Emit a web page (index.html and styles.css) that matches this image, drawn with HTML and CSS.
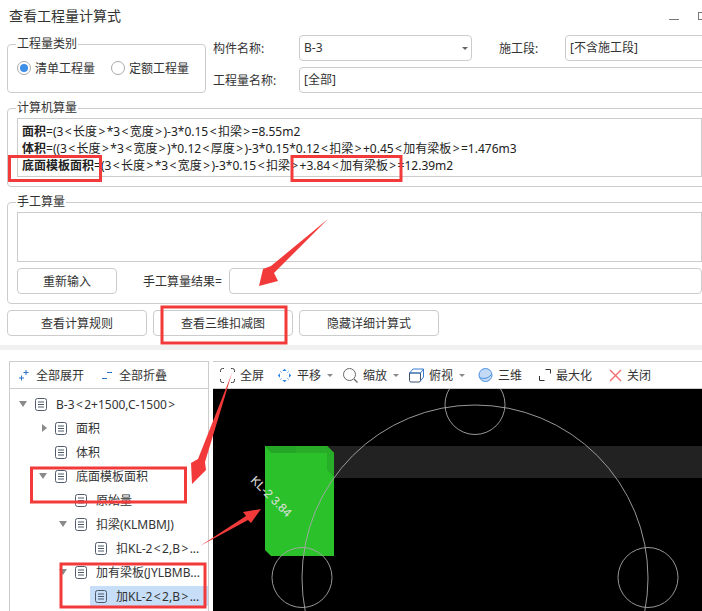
FILE: index.html
```html
<!DOCTYPE html>
<html lang="zh-CN">

<head>
    <meta charset="UTF-8">
    <meta name="viewport" content="width=device-width, initial-scale=1.0">
    <title>查看工程量计算式</title>
    <link rel="stylesheet" href="styles.css">
</head>

<body>
    <svg class="defs" width="0" height="0">
        <symbol id="doc" viewBox="0 0 12 13">
            <rect x="0.5" y="0.5" width="11" height="12" rx="2" fill="none" stroke="#4f5a6b" />
            <path d="M3 4h6M3 6.5h6M3 9h6" stroke="#4f5a6b" fill="none" />
        </symbol>
    </svg>

    <div class="page">
        <div class="titlebar">
            <span class="title">查看工程量计算式</span>
            <span class="win-min"></span>
            <span class="win-max"></span>
        </div>

        <div class="top">
            <fieldset class="group type-group">
                <legend>工程量类别</legend>
                <div class="radios">
                    <span class="radio checked"></span><span class="radio-text">清单工程量</span>
                    <span class="radio second"></span><span class="radio-text">定额工程量</span>
                </div>
            </fieldset>
            <div class="fields">
                <span class="field-label">构件名称:</span>
                <div class="input select">B-3<span class="caret"></span></div>
                <span class="field-label seg-label">施工段:</span>
                <div class="input seg-input">[不含施工段]</div>
                <span class="field-label">工程量名称:</span>
                <div class="input name-input">[全部]</div>
            </div>
        </div>

        <fieldset class="group calc-group">
            <legend>计算机算量</legend>
            <div class="box formulas">
                <div><b>面积</b>=(3<i>&lt;</i>长度<i>&gt;</i>*3<i>&lt;</i>宽度<i>&gt;</i>)-3*0.15<i>&lt;</i>扣梁<i>&gt;</i>=8.55m2</div>
                <div><b>体积</b>=((3<i>&lt;</i>长度<i>&gt;</i>*3<i>&lt;</i>宽度<i>&gt;</i>)*0.12<i>&lt;</i>厚度<i>&gt;</i>)-3*0.15*0.12<i>&lt;</i>扣梁<i>&gt;</i>+0.45<i>&lt;</i>加有梁板<i>&gt;</i>=1.476m3</div>
                <div><b>底面模板面积</b>=(3<i>&lt;</i>长度<i>&gt;</i>*3<i>&lt;</i>宽度<i>&gt;</i>)-3*0.15<i>&lt;</i>扣梁<i>&gt;</i>+3.84<i>&lt;</i>加有梁板<i>&gt;</i>=12.39m2</div>
            </div>
        </fieldset>

        <fieldset class="group manual-group">
            <legend>手工算量</legend>
            <div class="box manual-box"></div>
            <div class="manual-row">
                <button class="btn reset-btn">重新输入</button>
                <span class="result-label">手工算量结果=</span>
                <div class="input result-input"></div>
            </div>
        </fieldset>

        <div class="actions">
            <button class="btn">查看计算规则</button>
            <button class="btn">查看三维扣减图</button>
            <button class="btn">隐藏详细计算式</button>
        </div>

        <div class="strip"></div>

        <div class="lower">
            <div class="tree-panel">
                <div class="tree-head">
                    <span class="head-btn">
                        <svg width="10" height="11" viewBox="0 0 10 11"><path d="M4.500 2.500h5M7 0v5M0 8h5M2.500 5.500v5" stroke="#2a72c8" fill="none" /></svg>
                        全部展开
                    </span>
                    <span class="head-btn">
                        <svg width="10" height="11" viewBox="0 0 10 11"><path d="M5 2.500h5M0 8.500h5" stroke="#2a72c8" fill="none" /></svg>
                        全部折叠
                    </span>
                </div>
                <div class="tree">
                    <div class="row level-0"><span class="tw open"></span><span class="node"><svg class="doc"><use href="#doc" /></svg><span>B-3<i>&lt;</i>2+1500,C-1500<i>&gt;</i></span></span></div>
                    <div class="row level-1"><span class="tw closed"></span><span class="node"><svg class="doc"><use href="#doc" /></svg>面积</span></div>
                    <div class="row level-1"><span class="tw"></span><span class="node"><svg class="doc"><use href="#doc" /></svg>体积</span></div>
                    <div class="row level-1"><span class="tw open"></span><span class="node"><svg class="doc"><use href="#doc" /></svg>底面模板面积</span></div>
                    <div class="row level-2"><span class="tw"></span><span class="node"><svg class="doc"><use href="#doc" /></svg>原始量</span></div>
                    <div class="row level-2"><span class="tw open"></span><span class="node"><svg class="doc"><use href="#doc" /></svg>扣梁(KLMBMJ)</span></div>
                    <div class="row level-3"><span class="tw"></span><span class="node"><svg class="doc"><use href="#doc" /></svg><span>扣KL-2<i>&lt;</i>2,B<i>&gt;</i>...</span></span></div>
                    <div class="row level-2"><span class="tw open"></span><span class="node"><svg class="doc"><use href="#doc" /></svg>加有梁板(JYLBMB...</span></div>
                    <div class="row level-3"><span class="tw"></span><span class="node selected"><svg class="doc"><use href="#doc" /></svg><span>加KL-2<i>&lt;</i>2,B<i>&gt;</i>...</span></span></div>
                </div>
            </div>

            <div class="view-panel">
                <div class="toolbar">
                    <span class="tool">
                        <svg width="15" height="15" viewBox="0 0 15 15"><path d="M.5 4V2.500a2 2 0 0 1 2-2H4M11 .5h1.500a2 2 0 0 1 2 2V4M14.500 11v1.500a2 2 0 0 1-2 2H11M4 14.500H2.500a2 2 0 0 1-2-2V11" fill="none" stroke="#444" /></svg>
                        全屏
                    </span>
                    <span class="tool has-caret">
                        <svg width="15" height="15" viewBox="0 0 15 15"><path d="M5.300 3 7.500.8 9.700 3zM5.300 12 7.500 14.200 9.700 12zM3 5.300.8 7.500 3 9.700zM12 5.300 14.200 7.500 12 9.700z" fill="#2d86e6" /><path d="M3.500 3.500l1 1M11.500 3.500l-1 1M3.500 11.500l1-1M11.500 11.500l-1-1" stroke="#2d86e6" /></svg>
                        平移
                    </span>
                    <span class="tool has-caret">
                        <svg width="15" height="15" viewBox="0 0 15 15"><circle cx="6.500" cy="6.500" r="6" fill="none" stroke="#666" /><path d="M11 11l3.500 3.500" stroke="#666" stroke-width="1.300" /></svg>
                        缩放
                    </span>
                    <span class="tool has-caret">
                        <svg width="15" height="15" viewBox="0 0 15 15"><path d="M.5 5v7.500A1.500 1.500 0 0 0 2 14h8a1.500 1.500 0 0 0 1.500-1.500V5z" fill="#fff" stroke="#3e5170" /><path d="M.5 5 4 1h10.500v8l-3 4M.5 5h11l3-4" fill="none" stroke="#3a7dd0" /></svg>
                        俯视
                    </span>
                    <span class="tool">
                        <svg width="15" height="14" viewBox="0 0 15 14"><circle cx="7.500" cy="7" r="6.500" fill="#c3d9f6" stroke="#4a90e2" /><path d="M1.500 9.500q7 3 12-3" fill="none" stroke="#4a90e2" /></svg>
                        三维
                    </span>
                    <span class="tool wide">
                        <svg width="12" height="12" viewBox="0 0 12 12"><path d="M6.500.5h5v4M.5 7v4.500h5" fill="none" stroke="#333" /></svg>
                        最大化
                    </span>
                    <span class="tool wide">
                        <svg width="13" height="13" viewBox="0 0 13 13"><path d="M1 1l11 11M12 1 1 12" stroke="#f26a6a" stroke-width="1.300" /></svg>
                        关闭
                    </span>
                </div>
                <svg class="canvas" viewBox="213 389 489 222" width="489" height="222">
                    <rect x="327" y="446" width="375" height="32" fill="#222" />
                    <polygon points="265,446 327,446 334,453 334,556 271,556 265,550" fill="#2ac12a" />
                    <polygon points="265,446 296,446 296,453 271,453" fill="#26a626" />
                    <polygon points="296,446 327,446 334,453 296,453" fill="#29ad29" />
                    <polygon points="327,453 334,453 334,477 327,470" fill="#27ad27" />
                    <g fill="none" stroke="#a8a8a8" stroke-width="0.900">
                        <circle cx="475" cy="404.500" r="30" />
                        <circle cx="648" cy="577.500" r="30" />
                        <circle cx="302" cy="577.500" r="30" />
                        <circle cx="475" cy="578" r="173" />
                    </g>
                    <text class="cad-label" transform="translate(250 481) rotate(45)">KL-2 3.84</text>
                </svg>
            </div>
        </div>
    </div>

    <!-- red marks drawn over the screenshot -->
    <svg class="marks" width="702" height="611" viewBox="0 0 702 611">
        <g fill="none" stroke="#f33a3a" stroke-width="3">
            <rect x="9.500" y="156.500" width="91" height="24" />
            <rect x="292" y="156.500" width="109" height="24" />
            <rect x="162" y="307" width="124" height="36" />
            <rect x="31.500" y="468" width="154" height="34" />
            <rect x="61" y="564" width="144" height="43" />
        </g>
        <g fill="#f33a3a">
            <polygon points="328,219 274,273 278,281 259,286 263,269 271,266" />
            <polygon points="232,373 205,462 206,470 192,484 191,463 198,459" />
            <polygon points="261,509 251,523 248,520 200,546 246,516 243,512" />
        </g>
    </svg>
</body>

</html>
```

FILE: styles.css
```css
html,
body {
    margin: 0;
    padding: 0;
    height: 611px;
    overflow: hidden;
    background-color: #fff;
}

body {
    position: relative;
    font-family: "Noto Sans", "Noto Sans CJK SC", sans-serif;
    font-size: 12px;
    color: #333;
}

/* the angle brackets are wider in the original font */
i {
    font-style: normal;
    padding: 0 1.4px;
}

.defs {
    position: absolute;
}

.page {
    width: 722px;
}

.titlebar {
    display: flex;
    align-items: flex-start;
    height: 36px;
    padding-left: 9px;
    box-sizing: border-box;
}

.title {
    font-size: 14px;
    line-height: 20px;
    margin-top: 6px;
    flex: 1;
}

.win-min {
    width: 10px;
    height: 1px;
    margin-top: 19px;
    background-color: #777;
}

.win-max {
    width: 10px;
    height: 8px;
    margin: 12px 14px 0 19px;
    border: 1px solid #777;
    box-sizing: border-box;
}

.group {
    margin: 0 10px 0 7px;
    padding: 2px 9px 9px 9px;
    border: 1px solid #ccc;
    border-radius: 4px;
    min-width: 0;
}

.group legend {
    padding: 0 1px;
    margin-left: -1px;
    line-height: 16px;
}

.top {
    display: flex;
}

.type-group {
    width: 199px;
    height: 57px;
    box-sizing: border-box;
    margin-right: 7px;
    flex: none;
}

.radios {
    display: flex;
    align-items: center;
    height: 20px;
    margin-top: 4px;
}

.radio {
    width: 14px;
    height: 14px;
    margin-left: 0;
    border: 1px solid #aaa;
    border-radius: 50%;
    box-sizing: border-box;
    position: relative;
    flex: none;
}

.radio.checked::after {
    content: "";
    position: absolute;
    left: 2px;
    top: 2px;
    width: 8px;
    height: 8px;
    border-radius: 50%;
    background-color: #3d8fe8;
}

.radio.second {
    margin-left: 16px;
}

.radio-text {
    margin-left: 4px;
    white-space: nowrap;
}

.fields {
    display: grid;
    grid-template-columns: 86px 173px 27px 66px 141px;
    grid-template-rows: 26px 26px;
    row-gap: 6px;
    margin-top: -1px;
    flex: none;
    align-items: center;
}

.seg-label {
    grid-column: 4;
}

.seg-input {
    grid-column: 5;
}

.name-input {
    grid-column: 2 / 6;
}

.field-label {
    white-space: nowrap;
}

.input {
    height: 26px;
    line-height: 24px;
    padding-left: 4px;
    border: 1px solid #ccc;
    border-radius: 4px;
    box-sizing: border-box;
    position: relative;
}

.caret {
    position: absolute;
    right: 3px;
    top: 11px;
    border-style: solid;
    border-width: 3px 3px 0 3px;
    border-color: #666 transparent transparent transparent;
}

.calc-group {
    margin-top: 7px;
}

.manual-group {
    margin-top: 7px;
}

.box {
    border: 1px solid #ccc;
    box-sizing: border-box;
}

.formulas {
    height: 59px;
    padding: 4px;
    line-height: 17px;
    color: #222;
    white-space: nowrap;
}

.formulas b {
    font-weight: 700;
}

.manual-box {
    height: 50px;
}

.manual-row {
    display: flex;
    align-items: center;
    margin-top: 6px;
}

.btn {
    height: 26px;
    padding: 0;
    font-family: inherit;
    font-size: 12px;
    color: #333;
    background-color: #fff;
    border: 1px solid #ccc;
    border-radius: 4px;
    box-sizing: border-box;
}

.reset-btn {
    width: 100px;
    flex: none;
}

.result-label {
    margin-left: 26px;
    width: 86px;
    flex: none;
}

.result-input {
    flex: 1;
}

.actions {
    display: flex;
    gap: 6px;
    margin: 6px 0 0 7px;
}

.actions .btn {
    width: 140px;
}

.strip {
    height: 5px;
    margin-top: 9px;
    background-color: #f0f0f0;
}

.lower {
    display: flex;
    margin-top: 11px;
    height: 250px;
}

.tree-panel {
    width: 200px;
    height: 250px;
    margin-left: 9px;
    border-left: 1px solid #ccc;
    border-right: 1px solid #ccc;
    box-sizing: border-box;
    flex: none;
}

.tree-head {
    display: flex;
    align-items: center;
    gap: 18px;
    height: 28px;
    padding-left: 9px;
    border-top: 1px solid #ccc;
    border-bottom: 1px solid #ccc;
    box-sizing: border-box;
}

.head-btn {
    display: inline-flex;
    align-items: center;
    gap: 7px;
    white-space: nowrap;
}

.tree {
    padding-top: 3px;
}

.row {
    display: flex;
    align-items: center;
    height: 24px;
    white-space: nowrap;
}

.level-0 {
    padding-left: 5px;
}

.level-1 {
    padding-left: 25px;
}

.level-2 {
    padding-left: 45px;
}

.level-3 {
    padding-left: 65px;
}

.tw {
    width: 20px;
    flex: none;
    position: relative;
}

.tw.open::after {
    content: "";
    position: absolute;
    left: 4px;
    top: -3px;
    border-style: solid;
    border-width: 6px 4px 0 4px;
    border-color: #8a8a8a transparent transparent transparent;
}

.tw.closed::after {
    content: "";
    position: absolute;
    left: 7px;
    top: -4px;
    border-style: solid;
    border-width: 4px 0 4px 5px;
    border-color: transparent transparent transparent #8a8a8a;
}

.node {
    display: flex;
    align-items: center;
    gap: 9px;
    flex: 1;
    height: 20px;
}

.node.selected {
    margin-left: -5px;
    padding-left: 5px;
    background-color: #c6def8;
}

.doc {
    width: 12px;
    height: 13px;
    flex: none;
}

.view-panel {
    margin-left: 4px;
    flex: 1;
}

.toolbar {
    display: flex;
    align-items: center;
    gap: 13px;
    height: 28px;
    padding-left: 7px;
    border-top: 1px solid #ccc;
    border-bottom: 1px solid #ccc;
    box-sizing: border-box;
    white-space: nowrap;
}

.tool {
    display: inline-flex;
    align-items: center;
    gap: 5px;
}

.has-caret {
    margin-right: 12px;
    position: relative;
}

.has-caret::after {
    content: "";
    position: absolute;
    right: -12px;
    top: 8px;
    border-style: solid;
    border-width: 3px 3px 0 3px;
    border-color: #888 transparent transparent transparent;
}

.has-caret + .has-caret {
    margin-left: -3px;
}

.wide {
    margin-left: 4px;
}

.canvas {
    display: block;
    background-color: #000;
}

.cad-label {
    font-family: "Liberation Sans", sans-serif;
    font-size: 12px;
    fill: #e0e0e0;
}

.marks {
    position: absolute;
    left: 0;
    top: 0;
    pointer-events: none;
}
```
